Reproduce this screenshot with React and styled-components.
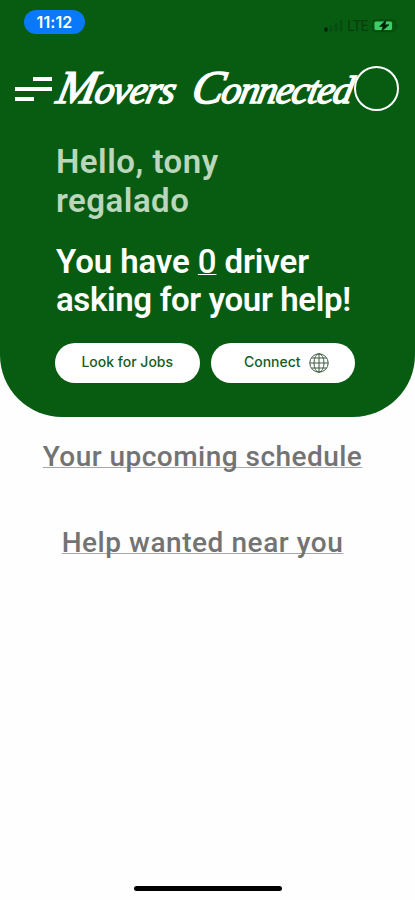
import React from "react";
import styled, { createGlobalStyle } from "styled-components";

const GlobalStyle = createGlobalStyle`
    body{
        margin:0;
        background:#fff;
        font-family:Roboto, "Liberation Sans", sans-serif;
    }
`
let Screen = styled.div`
    height:900px;
    width:415px;
    display:flex;
    flex-direction:column;
    align-items:center;
    overflow:hidden;
    background:#fefefe;
`
let Hero = styled.div`
    box-sizing:border-box;
    height:417px;
    width:100%;
    flex-shrink:0;
    background:#085c12;
    border-radius:0 0 62px 62px;
`
let StatusBar = styled.div`
    box-sizing:border-box;
    height:66px;
    padding:10px 16px 0 24px;
    display:flex;
    justify-content:space-between;
    align-items:flex-start;
`
let Time = styled.div`
    height:24px;
    width:61px;
    border-radius:12px;
    background:#0879fb;
    color:#fff;
    font:600 16px/25px Inter, sans-serif;
    letter-spacing:0.1px;
    text-align:center;
`
let Indicators = styled.div`
    display:flex;
    align-items:center;
    height:32px;
    .network{
        width:20px;
        margin:0 5px 0 3px;
        color:#063c0b;
        font:400 14px/18px Inter, sans-serif;
        letter-spacing:-1px;
    }
`
let Header = styled.div`
    height:45px;
    padding:0 16px 0 15px;
    display:flex;
    align-items:center;
`
let MenuLines = styled.div`
    width:37px;
    flex-shrink:0;
    display:flex;
    flex-direction:column;
    gap:6px;
    span{
        height:4px;
        width:19px;
        background:#fff;
    }
    span:first-child{
        align-self:flex-end;
    }
    span:nth-child(2){
        width:37px;
    }
`
let Wordmark = styled.div`
    box-sizing:border-box;
    width:302px;
    padding-left:6px;
    display:flex;
    gap:15px;
    color:#fff;
    white-space:nowrap;
    font:italic 400 39px/46px "Liberation Serif", serif;
    -webkit-text-stroke:1.5px #fff;
`
let Word = styled.span`
    width:${props => props.$width}px;
    letter-spacing:${props => props.$spacing}px;
    transform:skewX(-12deg);
    &::first-letter{
        font-size:47px;
    }
`
let Avatar = styled.div`
    box-sizing:border-box;
    height:45px;
    width:45px;
    flex-shrink:0;
    border:2px solid #fff;
    border-radius:50%;
`
let Greeting = styled.div`
    padding:31px 55px 0 56px;
    white-space:nowrap;
    p{
        margin:0;
    }
    .hello{
        color:#bad7bc;
        font-size:33px;
        line-height:39px;
        font-weight:600;
        letter-spacing:0.5px;
    }
    .message{
        margin-top:23px;
        color:#fff;
        font-size:33px;
        line-height:37.5px;
        font-weight:600;
        letter-spacing:-0.1px;
    }
    .asking{
        letter-spacing:-0.35px;
    }
    .count{
        text-decoration:underline;
        text-decoration-thickness:1px;
        text-underline-offset:1px;
        text-decoration-skip-ink:none;
        font-weight:500;
    }
`
let Actions = styled.div`
    display:flex;
    gap:11px;
    padding:25px 0 0 55px;
`
let Pill = styled.div`
    box-sizing:border-box;
    height:40px;
    width:144.5px;
    padding-left:${props => props.$indent || 0}px;
    display:flex;
    align-items:center;
    justify-content:center;
    gap:8px;
    border-radius:20px;
    background:#fff;
    color:#175c25;
    font:500 14px/18px Inter, sans-serif;
    span{
        margin-top:-3px;
    }
`
let SectionTitle = styled.div`
    margin-top:${props => props.$top}px;
    margin-right:10px;
    color:#737373;
    white-space:nowrap;
    font-size:28px;
    line-height:36px;
    font-weight:500;
    letter-spacing:${props => props.$spacing}px;
    text-decoration:underline;
    text-decoration-color:#a8a8a8;
    text-decoration-thickness:1px;
    text-underline-offset:1px;
    text-decoration-skip-ink:none;
`
let HomeBar = styled.div`
    height:5px;
    width:148px;
    margin:auto 0 9px;
    border-radius:3px;
    background:#000;
`

function Signal(){
    return(
        <svg width="20" height="14" viewBox="0 0 20 14">
            <rect x="0.5" y="8.5" width="3" height="4" rx="1" fill="#031c06" />
            <rect x="5.5" y="6.5" width="3" height="6" rx="1" fill="#084d10" />
            <rect x="10.5" y="4" width="3" height="8.5" rx="1" fill="#084d10" />
            <rect x="15.5" y="1" width="3" height="11.5" rx="1" fill="#084d10" />
        </svg>
    )
}

function Battery(){
    return(
        <svg width="27" height="14" viewBox="0 0 27 14">
            <rect x="0.7" y="1" width="22.6" height="11.5" rx="3.5" fill="none" stroke="#064b0e" strokeWidth="1.3" />
            <path d="M24.5 4.7q3 2 0 4z" fill="#064b0e" />
            <rect x="2.5" y="2.5" width="17.5" height="8.5" rx="1.5" fill="#3ccd69" />
            <path d="M14 1L7.5 7.5H11L9.5 12.5L17 5.8H13Z" fill="#031c06" stroke="#063c0b" strokeWidth="0.8" />
        </svg>
    )
}

function Globe(){
    return(
        <svg width="20" height="20" viewBox="0 0 20 20" fill="none" stroke="#3b5c40" strokeWidth="1">
            <circle cx="10" cy="10" r="9.2" />
            <ellipse cx="10" cy="10" rx="5" ry="9.2" />
            <path d="M10 .8v18.4M.8 10h18.4M2.5 5h15M2.5 15h15" />
        </svg>
    )
}

export default function App(){
    return(
        <Screen>
            <GlobalStyle />
            <Hero>
                <StatusBar>
                    <Time>11:12</Time>
                    <Indicators>
                        <Signal />
                        <div className="network">LTE</div>
                        <Battery />
                    </Indicators>
                </StatusBar>
                <Header>
                    <MenuLines>
                        <span></span>
                        <span></span>
                        <span></span>
                    </MenuLines>
                    <Wordmark>
                        <Word $width={120} $spacing={-1}>Movers</Word>
                        <Word $width={160} $spacing={-1.4}>Connected</Word>
                    </Wordmark>
                    <Avatar />
                </Header>
                <Greeting>
                    <p className="hello">Hello, tony<br />regalado</p>
                    <p className="message">
                        You have <span className="count">0</span> driver<br />
                        <span className="asking">asking for your help!</span>
                    </p>
                </Greeting>
                <Actions>
                    <Pill><span>Look for Jobs</span></Pill>
                    <Pill $indent={7}><span>Connect</span><Globe /></Pill>
                </Actions>
            </Hero>
            <SectionTitle $top={22} $spacing={0.47}>Your upcoming schedule</SectionTitle>
            <SectionTitle $top={50} $spacing={0.55}>Help wanted near you</SectionTitle>
            <HomeBar />
        </Screen>
    )
}
